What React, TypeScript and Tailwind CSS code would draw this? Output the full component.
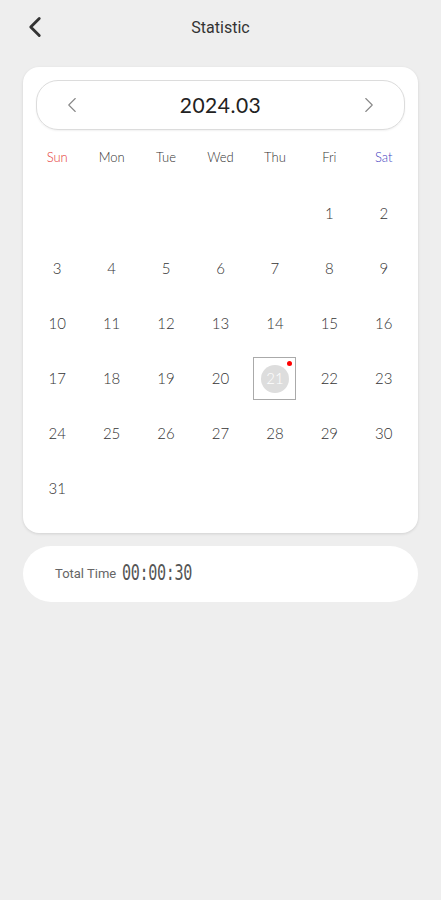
import { ChevronLeft, ChevronRight } from "lucide-react";

const weekdays = ["Sun", "Mon", "Tue", "Wed", "Thu", "Fri", "Sat"];

// March 2024 starts on Friday
const cells: (number | null)[] = [
  null, null, null, null, null,
  ...Array.from({ length: 31 }, (_, i) => i + 1),
];

export default function App() {
  return (
    <div className="min-h-screen w-full bg-[#eeeeee] font-['Roboto',sans-serif]">
      {/* Top bar */}
      <div className="relative flex h-[56px] items-center justify-center">
        <button className="absolute left-[18px] top-[10px] text-[#333]">
          <ChevronLeft size={34} strokeWidth={2} />
        </button>
        <h1 className="text-[16px] text-[#333]">Statistic</h1>
      </div>

      {/* Calendar card */}
      <div className="mx-[23px] mt-[11px] rounded-[16px] bg-white px-[7px] pb-[17px] pt-[13px] shadow-[0_1px_3px_rgba(0,0,0,0.12)]">
        <div className="mx-[6px] flex h-[50px] items-center justify-between rounded-[22px] border border-[#dcdcdc] px-[22px] shadow-[0_1px_2px_rgba(0,0,0,0.06)]">
          <ChevronLeft size={26} strokeWidth={1} className="text-[#888]" />
          <span className="font-['Lato',sans-serif] text-[21px] tracking-[0.5px] text-[#222]">2024.03</span>
          <ChevronRight size={26} strokeWidth={1} className="text-[#888]" />
        </div>

        <div className="mt-[13px] grid grid-cols-7 font-['Lato',sans-serif] text-[13px] font-light">
          {weekdays.map((d, i) => (
            <div
              key={d}
              className={
                "flex h-[30px] items-center justify-center " +
                (i === 0 ? "text-[#e53935]" : i === 6 ? "text-[#3f3fbf]" : "text-[#333]")
              }
            >
              {d}
            </div>
          ))}
        </div>

        <div className="mt-[13px] grid grid-cols-7 font-['Lato',sans-serif] text-[15px] font-light text-[#333]">
          {cells.map((n, i) => (
            <div key={i} className="flex h-[55px] items-center justify-center">
              {n === 21 ? (
                <div className="relative flex h-[43px] w-[43px] items-center justify-center border border-[#aaaaaa]">
                  <span className="flex h-[28px] w-[28px] items-center justify-center rounded-full bg-[#dddddd] text-white">
                    21
                  </span>
                  <span className="absolute right-[3px] top-[3px] h-[5px] w-[5px] rounded-full bg-[#ff0000]" />
                </div>
              ) : (
                n ?? ""
              )}
            </div>
          ))}
        </div>
      </div>

      {/* Total time */}
      <div className="mx-[23px] mt-[13px] flex h-[56px] items-center gap-[6px] rounded-[28px] bg-white px-[32px]">
        <span className="text-[13px] text-[#666]">Total Time</span>
        <span className="inline-block origin-left scale-x-[0.72] font-['DejaVu_Sans_Mono',monospace] text-[21px] tracking-[-0.5px] text-[#555]">
          00:00:30
        </span>
      </div>
    </div>
  );
}
